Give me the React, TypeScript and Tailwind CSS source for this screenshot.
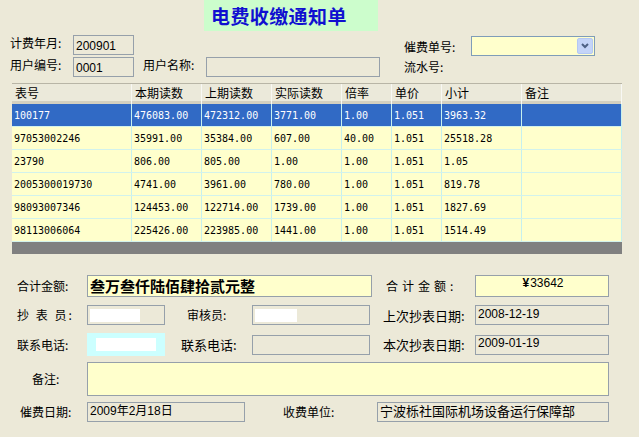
import { ReactNode } from 'react';

// Types
type Row = string[];

const columns = [
  { title: '表号', w: 'w-[120px]' },
  { title: '本期读数', w: 'w-[70px]' },
  { title: '上期读数', w: 'w-[70px]' },
  { title: '实际读数', w: 'w-[70px]' },
  { title: '倍率', w: 'w-[50px]' },
  { title: '单价', w: 'w-[50px]' },
  { title: '小计', w: 'w-[80px]' },
  { title: '备注', w: 'w-[100px]' },
];

const rows: Row[] = [
  ['100177', '476083.00', '472312.00', '3771.00', '1.00', '1.051', '3963.32', ''],
  ['97053002246', '35991.00', '35384.00', '607.00', '40.00', '1.051', '25518.28', ''],
  ['23790', '806.00', '805.00', '1.00', '1.00', '1.051', '1.05', ''],
  ['2005300019730', '4741.00', '3961.00', '780.00', '1.00', '1.051', '819.78', ''],
  ['98093007346', '124453.00', '122714.00', '1739.00', '1.00', '1.051', '1827.69', ''],
  ['98113006064', '225426.00', '223985.00', '1441.00', '1.00', '1.051', '1514.49', ''],
];

// Components
const Box = ({ className = '', children }: { className?: string; children?: ReactNode }) => (
  <div
    className={`border border-[#96a0aa] flex items-center pl-[2px] text-[12px] font-['Liberation_Sans','Noto_Sans_CJK_SC',sans-serif] overflow-hidden whitespace-nowrap ${className}`}
  >
    {children}
  </div>
);

const Label = ({ className = '', children }: { className?: string; children: ReactNode }) => (
  <span className={`text-[12px] leading-none whitespace-nowrap ${className}`}>{children}</span>
);

const Blob = ({ w }: { w: string }) => <div className={`h-[13px] bg-white ${w}`} />;

const DataGrid = () => (
  <div className="ml-[12px] w-[610px] mt-[6px] border-t border-[#b8b5a6]">
    <div className="flex h-[20px] bg-[#ebe9da] shadow-[inset_0_-3px_0_#d4d0c0]">
      {columns.map((c) => (
        <div
          key={c.title}
          className={`${c.w} h-full flex items-start pt-[2px] pl-[3px] text-[12px] leading-[14px] border-r border-[#f8f8f4]`}
        >
          {c.title}
        </div>
      ))}
    </div>
    {rows.map((r, i) => (
      <div
        key={r[0]}
        className={`flex h-[23px] border-b border-[#d2f2ec] ${i === 0 ? 'bg-[#316ac5] text-white' : 'bg-[#ffffcc] text-black'}`}
      >
        {r.map((cell, j) => (
          <div
            key={j}
            className={`${columns[j].w} h-full flex items-center pl-[2px] border-r border-[#c6f0ee] font-['DejaVu_Sans_Mono',monospace] text-[10px]`}
          >
            {cell}
          </div>
        ))}
      </div>
    ))}
    <div className="h-[12px] bg-[#808080]" />
  </div>
);

// Main component
export default function App() {
  return (
    <div className="w-[639px] h-[437px] overflow-hidden bg-[#ece9d8] text-black font-['Noto_Sans_CJK_SC',sans-serif]">
      {/* title */}
      <div className="flex h-[31px]">
        <div className="ml-[204px] w-[174px] h-[31px] bg-[#ccfdcc] flex items-center pl-[7px] text-[#1010d0] font-bold text-[19px] leading-none tracking-[0.4px]">
          电费收缴通知单
        </div>
      </div>

      {/* header form */}
      <div className="flex mt-[4px]">
        <div className="flex flex-col gap-[2px]">
          <div className="flex items-center h-[20px]">
            <Label className="w-[73px] pl-[10px] -mt-[5px]">计费年月:</Label>
            <Box className="w-[61px] h-[20px] pt-[2px]">200901</Box>
          </div>
          <div className="flex items-center h-[20px]">
            <Label className="w-[73px] pl-[10px] -mt-[5px]">用户编号:</Label>
            <Box className="w-[61px] h-[20px] pt-[2px]">0001</Box>
            <Label className="ml-[9px] w-[63px] -mt-[5px]">用户名称:</Label>
            <Box className="w-[174px] h-[20px]" />
          </div>
        </div>
        <div className="ml-[24px] flex flex-col">
          <div className="flex items-center h-[20px] mt-[1px]">
            <Label className="w-[67px] mt-[2px]">催费单号:</Label>
            <div className="w-[124px] h-[20px] border border-[#7f9db9] bg-[#ffffcc] flex justify-end p-[1px]">
              <div className="w-[16px] h-full rounded-[2px] bg-[#c4d4f8] border border-[#b4c8f4] flex items-center justify-center">
                <svg width="8" height="6" viewBox="0 0 8 6">
                  <path d="M1 1 L4 4 L7 1" stroke="#4d6185" strokeWidth="2" fill="none" />
                </svg>
              </div>
            </div>
          </div>
          <div className="h-[20px] flex items-center mt-[1px]">
            <Label>流水号:</Label>
          </div>
        </div>
      </div>

      <DataGrid />

      {/* totals */}
      <div className="flex items-center mt-[21px] h-[22px]">
        <Label className="w-[87px] pl-[17px]">合计金额:</Label>
        <Box className="w-[285px] h-[22px] bg-[#ffffcc] font-bold text-[15px] !font-['Noto_Sans_CJK_SC',sans-serif]">
          叁万叁仟陆佰肆拾贰元整
        </Box>
        <Label className="w-[103px] pl-[14px] tracking-[4px]">合计金额:</Label>
        <Box className="w-[134px] h-[22px] bg-[#ffffcc] justify-center pl-0 pb-[6px]">
          <span className="font-bold">¥</span>
          <span className="ml-[1px]">33642</span>
        </Box>
      </div>

      <div className="flex items-center mt-[8px] h-[20px]">
        <Label className="w-[87px] pl-[17px] tracking-[2px]">抄 表 员:</Label>
        <Box className="w-[78px] h-[20px] pl-0">
          <Blob w="w-[50px]" />
        </Box>
        <Label className="w-[87px] pl-[22px]">审核员:</Label>
        <Box className="w-[118px] h-[20px] pl-0">
          <Blob w="w-[42px]" />
        </Box>
        <Label className="w-[105px] pl-[13px] text-[13px]">上次抄表日期:</Label>
        <Box className="w-[134px] h-[20px] font-['DejaVu_Sans_Mono',monospace] text-[10px] pb-[3px]">2008-12-19</Box>
      </div>

      <div className="flex items-center mt-[8px] h-[23px]">
        <Label className="w-[87px] pl-[17px]">联系电话:</Label>
        <div className="w-[78px] h-[23px] bg-[#ccffff] flex items-center pl-[9px]">
          <Blob w="w-[60px]" />
        </div>
        <Label className="w-[87px] pl-[16px] text-[13px]">联系电话:</Label>
        <Box className="w-[118px] h-[20px]" />
        <Label className="w-[105px] pl-[13px] text-[13px]">本次抄表日期:</Label>
        <Box className="w-[134px] h-[20px] font-['DejaVu_Sans_Mono',monospace] text-[10px] pb-[3px]">2009-01-19</Box>
      </div>

      <div className="flex items-center mt-[6px] h-[34px]">
        <Label className="w-[87px] pl-[32px]">备注:</Label>
        <Box className="w-[522px] h-[34px] bg-[#ffffcc]" />
      </div>

      <div className="flex items-center mt-[6px] h-[20px]">
        <Label className="w-[87px] pl-[20px]">催费日期:</Label>
        <Box className="w-[158px] h-[20px] pb-[3px]">2009年2月18日</Box>
        <Label className="w-[132px] pl-[38px]">收费单位:</Label>
        <Box className="w-[232px] h-[20px] text-[13px] !font-['Noto_Sans_CJK_SC',sans-serif] pb-[2px]">
          宁波栎社国际机场设备运行保障部
        </Box>
      </div>
    </div>
  );
}
